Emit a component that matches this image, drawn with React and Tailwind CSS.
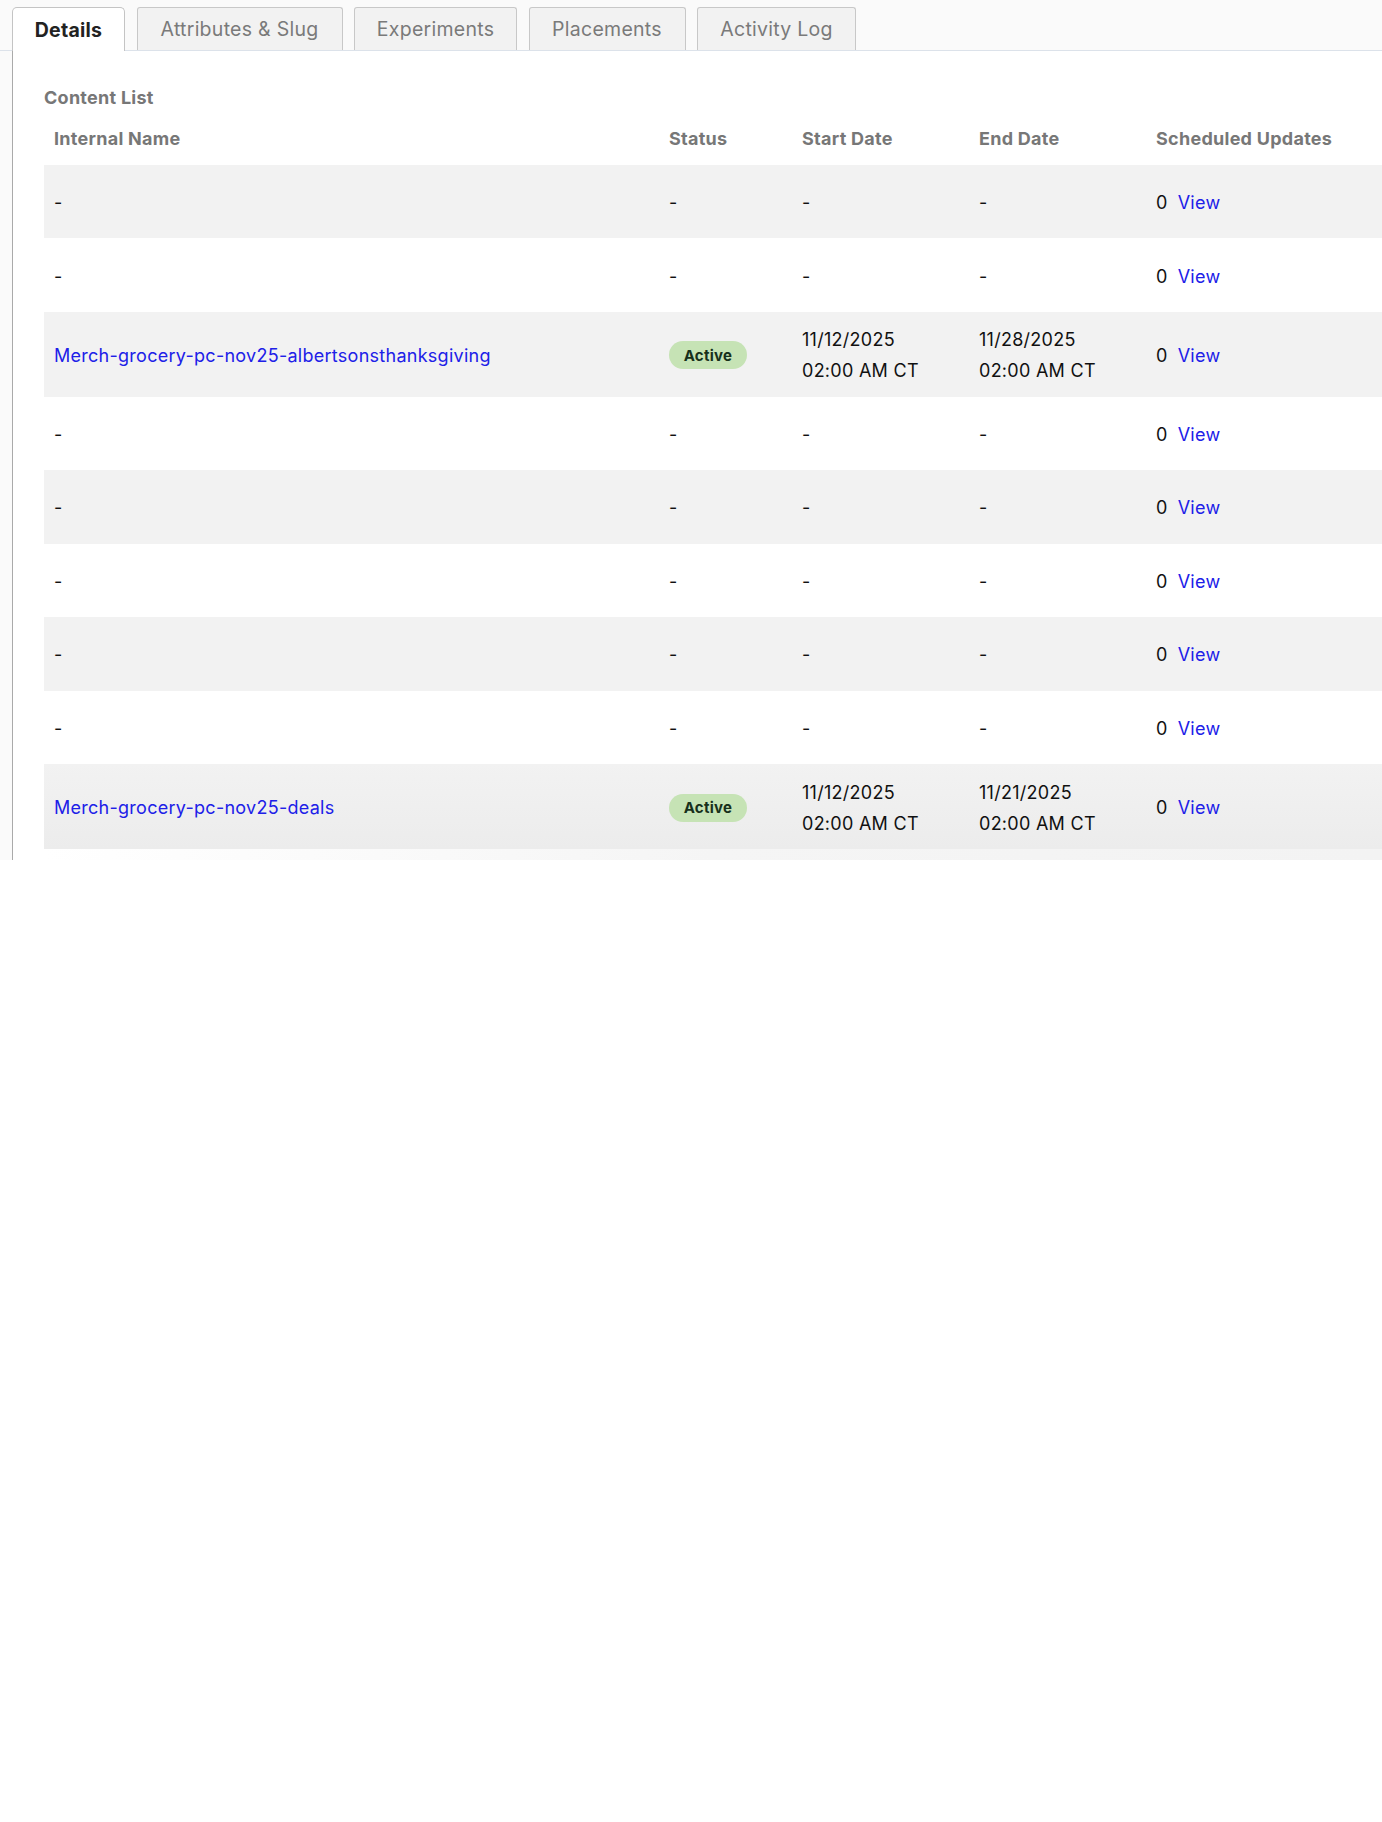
import React from "react";

const rows = [
  { name: null },
  { name: null },
  { name: "Merch-grocery-pc-nov25-albertsonsthanksgiving", start: "11/12/2025", end: "11/28/2025" },
  { name: null },
  { name: null },
  { name: null },
  { name: null },
  { name: null },
  { name: "Merch-grocery-pc-nov25-deals", start: "11/12/2025", end: "11/21/2025", last: true },
];

const tabs = [
  { label: "Details", w: "w-[113px]", active: true },
  { label: "Attributes & Slug", w: "w-[206px]" },
  { label: "Experiments", w: "w-[163px]" },
  { label: "Placements", w: "w-[157px]" },
  { label: "Activity Log", w: "w-[159px]" },
];

function Cell({ children, className = "" }) {
  return <div className={"flex items-center pl-[10px] " + className}>{children}</div>;
}

export default function App() {
  return (
    <div className="min-h-[1822px] w-full bg-white font-['Inter','Liberation_Sans',sans-serif] text-[18px] tracking-[0.015em] text-[#111]">
      <div className="flex h-[860px] flex-col bg-[#fafafa]">
        <div className="flex h-[51px] items-end gap-[11.5px] border-b border-[#dce2ea] pl-[12px]">
          {tabs.map((t) =>
            t.active ? (
              <div
                key={t.label}
                className={`${t.w} -mb-px flex h-[44px] items-center justify-center rounded-t-[5px] border border-b-0 border-[#c4c4c4] bg-white pt-[2px] text-[19.5px] font-bold text-[#222]`}
              >
                {t.label}
              </div>
            ) : (
              <div
                key={t.label}
                className={`${t.w} flex h-[43px] items-center justify-center whitespace-nowrap rounded-t-[3px] border border-b-0 border-[#c8c8c8] bg-[#f2f2f2] pt-[2px] text-[19.5px] text-[#7a7a7a]`}
              >
                {t.label}
              </div>
            )
          )}
        </div>
        <div className="ml-[12px] flex flex-1 flex-col overflow-hidden border-l border-[#aaaaaa] bg-white pl-[31px] pt-[35px]">
          <div className="h-[24px] text-[18px] font-bold leading-[24px] text-[#777]">Content List</div>
          <div className="grid h-[55px] grid-cols-[615px_133px_177px_177px_1fr] items-end pb-[14px] text-[18px] font-bold leading-[24px] text-[#777]">
            <div className="pl-[10px]">Internal Name</div>
            <div className="pl-[10px]">Status</div>
            <div className="pl-[10px]">Start Date</div>
            <div className="pl-[10px]">End Date</div>
            <div className="whitespace-nowrap pl-[10px]">Scheduled Updates</div>
          </div>
          {rows.map((r, i) => {
            const gray = i % 2 === 0;
            const bg = r.last
              ? "bg-gradient-to-b from-[#f2f2f2] to-[#ececec]"
              : gray
              ? "bg-[#f2f2f2]"
              : "bg-white";
            return (
              <div
                key={i}
                className={`grid grid-cols-[615px_133px_177px_177px_1fr] ${r.name ? "h-[85px]" : "h-[73.5px]"} ${bg} pt-[2px] leading-[31px]`}
              >
                <Cell>
                  {r.name ? <span className="text-[#2020e8]">{r.name}</span> : "-"}
                </Cell>
                <Cell>
                  {r.name ? (
                    <span className="flex h-[28px] w-[78px] items-center justify-center rounded-full bg-[#c6e3b5] text-[15px] font-bold tracking-[0.02em] text-[#17301b]">
                      Active
                    </span>
                  ) : (
                    "-"
                  )}
                </Cell>
                <Cell>
                  {r.name ? (
                    <div className="flex flex-col">
                      <span>{r.start}</span>
                      <span>02:00 AM CT</span>
                    </div>
                  ) : (
                    "-"
                  )}
                </Cell>
                <Cell>
                  {r.name ? (
                    <div className="flex flex-col">
                      <span>{r.end}</span>
                      <span>02:00 AM CT</span>
                    </div>
                  ) : (
                    "-"
                  )}
                </Cell>
                <Cell>
                  <span>0</span>
                  <a className="ml-[10px] text-[#2020e8]" href="#">View</a>
                </Cell>
              </div>
            );
          })}
          <div className="h-[11px] bg-gradient-to-r from-white via-[#f5f5f5] to-[#f3f3f3]" />
        </div>
      </div>
    </div>
  );
}
